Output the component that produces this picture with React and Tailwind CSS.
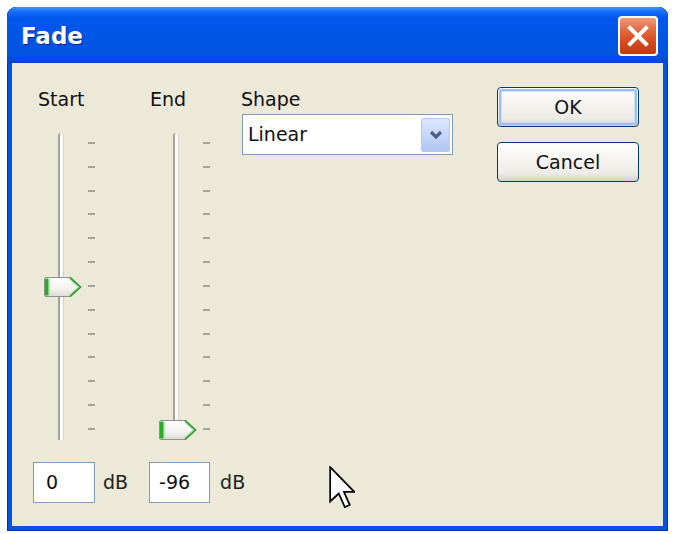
import React from 'react';

const font = { fontFamily: '"DejaVu Sans", Tahoma, sans-serif' };

function Thumb() {
    return (
        <svg width="40" height="22" viewBox="0 0 40 22">
            <defs>
                <linearGradient id="thumbBody" x1="0" y1="0" x2="0" y2="1">
                    <stop offset="0" stopColor="#ffffff" />
                    <stop offset="0.6" stopColor="#f3f2ee" />
                    <stop offset="1" stopColor="#dcdad2" />
                </linearGradient>
            </defs>
            <path d="M3 1.5 H27 L37.5 11 L27 20.5 H3 Q1.5 20.5 1.5 19 V3 Q1.5 1.5 3 1.5 Z" fill="url(#thumbBody)" stroke="#8f928f" strokeWidth="1" />
            <path d="M27 1.5 L37.5 11 L27 20.5" fill="none" stroke="#3c9e3c" strokeWidth="1.8" />
            <path d="M26.5 3 L35.5 11 L26.5 19" fill="none" stroke="#8fd68f" strokeWidth="1" />
            <rect x="2" y="2.5" width="4" height="17" rx="1" fill="#27ae27" />
            <rect x="5" y="3" width="1.5" height="16" fill="#7ad67a" />
        </svg>
    );
}

function Slider({ index }) {
    const ticks = Array.from({ length: 13 });
    return (
        <div className="relative flex w-[60px] h-[307px]">
            <div className="ml-[18px] w-[6px] h-full rounded-t-full border-l-2 border-[#a3a29d] border-r border-r-[#d6d4ca] bg-[#fbfbf8]" />
            <div className="ml-[24px] mt-[9px] h-[288px] flex flex-col justify-between">
                {ticks.map((_, i) => (
                    <div key={i} className="w-[7px] h-[2px] bg-[#a3a3a0]" />
                ))}
            </div>
            <div className="absolute left-[3px]" style={{ top: index * 23.83 }}>
                <Thumb />
            </div>
        </div>
    );
}

function XpButton({ label, focused }) {
    return (
        <div className="w-[142px] h-[40px] rounded-[4px] border border-[#003c74] bg-[linear-gradient(to_bottom,#ffffff_0%,#f6f5f1_40%,#ecebe6_80%,#d6d0c5_100%)] p-[1px]">
            <div className={`w-full h-full rounded-[3px] flex items-center justify-center text-[19px] text-[#111] ${focused ? 'border-2 border-[#9cbdf5] shadow-[inset_0_0_0_1px_#cfe0fb]' : ''}`}>
                {label}
            </div>
        </div>
    );
}

function Cursor() {
    return (
        <svg width="26" height="43" viewBox="-0.5 -0.5 12 20">
            <path d="M0 0 V16 L4 12.3 L6.8 18.6 L9.1 17.6 L6.4 11.5 H11.2 Z" fill="#ffffff" stroke="#000000" strokeWidth="0.8" strokeLinejoin="miter" />
        </svg>
    );
}

export default function App() {
    return (
        <div className="w-[673px] h-[534px] bg-white pt-[7px] pl-[7px]" style={font}>
            <div className="w-[661px] h-[524px] rounded-t-[9px] bg-[#0453df] flex flex-col overflow-hidden shadow-[inset_0_0_0_1px_#0a2fb0]">
                <div className="h-[56px] shrink-0 flex items-center pl-[14px] pr-[10px] rounded-t-[9px] bg-[linear-gradient(to_bottom,#3d92ff_0%,#1a6df5_8%,#0058ee_18%,#0055e5_50%,#0053e1_85%,#0046cf_100%)]">
                    <div className="text-[23px] font-bold text-white leading-none mt-[2px] [text-shadow:1px_1px_0_#0a1f80]">Fade</div>
                    <div className="ml-auto mt-[1px] w-[40px] h-[40px] rounded-[4px] border-2 border-white bg-[linear-gradient(to_bottom,#ef9b7c_0%,#e2673e_35%,#d4481c_70%,#c23b12_100%)] flex items-center justify-center">
                        <svg width="26" height="26" viewBox="0 0 26 26">
                            <path d="M5 5 L21 21 M21 5 L5 21" stroke="#ffffff" strokeWidth="4" strokeLinecap="square" />
                        </svg>
                    </div>
                </div>
                <div className="flex-1 mx-[5px] mb-[5px] bg-[#ece9d8] pt-[24px] text-[#111]">
                    <div className="flex items-start pl-[26px]">
                        <div className="w-[112px] mt-[3px]">
                            <div className="text-[19px] leading-[19px]">Start</div>
                            <div className="ml-[2px] mt-[24px]">
                                <Slider index={6} />
                            </div>
                        </div>
                        <div className="w-[91px] mt-[3px]">
                            <div className="text-[19px] leading-[19px]">End</div>
                            <div className="ml-[5px] mt-[24px]">
                                <Slider index={12} />
                            </div>
                        </div>
                        <div className="w-[212px] mt-[3px]">
                            <div className="text-[19px] leading-[19px]">Shape</div>
                            <div className="ml-[1px] mt-[5px] w-[211px] h-[41px] border border-[#7f9db9] bg-white flex items-center pl-[5px] pr-[2px]">
                                <span className="text-[19px] leading-none">Linear</span>
                                <div className="ml-auto w-[29px] h-[34px] rounded-[2px] border border-[#b4c8f2] bg-[linear-gradient(to_bottom,#dde8fe_0%,#c6d6fb_50%,#b2c7f5_100%)] flex items-center justify-center">
                                    <svg width="16" height="12" viewBox="0 0 16 12">
                                        <path d="M3 3 L8 8 L13 3" fill="none" stroke="#4d6185" strokeWidth="3.2" />
                                    </svg>
                                </div>
                            </div>
                        </div>
                        <div className="ml-[44px] flex flex-col gap-[15px]">
                            <XpButton label="OK" focused />
                            <XpButton label="Cancel" />
                        </div>
                    </div>
                    <div className="flex items-start pl-[21px] mt-[22px]">
                        <div className="w-[62px] h-[41px] border border-[#7f9db9] bg-white flex items-center pl-[12px] text-[19px]">0</div>
                        <div className="ml-[8px] h-[41px] flex items-center text-[19px] text-[#222]">dB</div>
                        <div className="ml-[21px] w-[61px] h-[41px] border border-[#7f9db9] bg-white flex items-center pl-[9px] text-[19px]">-96</div>
                        <div className="ml-[10px] h-[41px] flex items-center text-[19px] text-[#222]">dB</div>
                        <div className="ml-[84px] mt-[4px]">
                            <Cursor />
                        </div>
                    </div>
                </div>
            </div>
        </div>
    );
}
